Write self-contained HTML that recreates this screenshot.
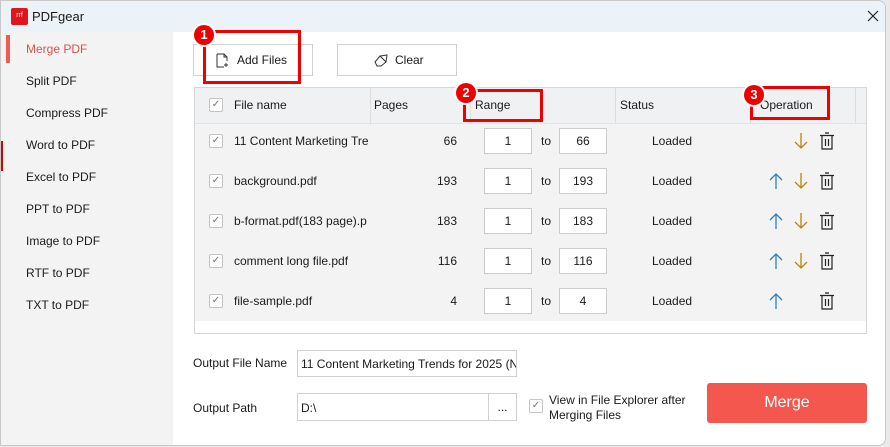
<!DOCTYPE html><html><head><style>
*{box-sizing:border-box;margin:0;padding:0}
body{width:890px;height:447px;background:#e9e9e9;font-family:"Liberation Sans",sans-serif;font-size:12px;color:#1a1a1a;position:relative;overflow:hidden}
.win{position:absolute;left:0;top:0;width:886px;height:446px;background:#fff;border:1px solid #c8c8c8;border-radius:0 8px 8px 0;overflow:hidden}
.title{position:absolute;left:0;top:0;width:100%;height:31px;background:#ebf3f8}
.side{position:absolute;left:0;top:31px;width:172px;height:420px;background:#f3f3f3}
.side div{position:absolute;left:25px;font-size:12px}
.a{position:absolute}
.btn{position:absolute;border:1px solid #d0d0d0;background:#fff;height:32px;top:43px}
.red{position:absolute;border:3px solid #e00}
.badge{position:absolute;width:20px;height:20px;border-radius:50%;background:#e00;color:#fff;font-weight:bold;font-size:13px;text-align:center;line-height:20px;box-shadow:0 0 0 2px #fff}
.cb{position:absolute;width:14px;height:14px;border:1px solid #c4c4c4;background:#fff;border-radius:2px;font-size:10px;color:#777;text-align:center;line-height:12px}
.box{position:absolute;width:48px;height:26px;border:1px solid #ccc;background:#fff;text-align:center;line-height:24px}
</style></head><body>
<div class="win">
<div class="title"></div>
<div class="a" style="left:10px;top:7px;width:17px;height:17px;background:#e0161f;border-radius:2px;color:#fff;font-size:7px;line-height:16px;text-align:center">rrf</div>
<div class="a" style="left:31px;top:8px;font-size:13px">PDFgear</div>
<svg class="a" style="left:866px;top:9px" width="12" height="12" viewBox="0 0 12 12" stroke="#222" stroke-width="1.2"><path d="M1 1L11 11M11 1L1 11"/></svg>
<div class="side">
<div class="a" style="left:5px;top:3px;width:4px;height:28px;background:#ee5a55"></div>
<div style="top:10px;color:#d9534f">Merge PDF</div>
<div style="top:42px">Split PDF</div>
<div style="top:74px">Compress PDF</div>
<div style="top:106px">Word to PDF</div>
<div style="top:138px">Excel to PDF</div>
<div style="top:170px">PPT to PDF</div>
<div style="top:202px">Image to PDF</div>
<div style="top:234px">RTF to PDF</div>
<div style="top:266px">TXT to PDF</div>
</div>
<div class="a" style="left:0;top:140px;width:2px;height:30px;background:#d00"></div>
<div class="btn" style="left:192px;width:120px"><svg class="a" style="left:22px;top:8px" width="14" height="15" viewBox="0 0 14 15" fill="none" stroke="#333" stroke-width="1"><path d="M1 1h7l3 3v4M1 1v13h7M8 1v3h3M10 10v4M8 12h4"/></svg><span class="a" style="left:43px;top:8px">Add Files</span></div>
<div class="btn" style="left:336px;width:120px"><svg class="a" style="left:36px;top:9px" width="15" height="13" viewBox="0 0 15 13" fill="none" stroke="#333" stroke-width="1"><path d="M6 2l7-1-1 7M1 8l5-6 6 6-5 4H3z"/></svg><span class="a" style="left:57px;top:8px">Clear</span></div>
<div class="a" style="left:193px;top:86px;width:673px;height:247px;border:1px solid #d6d6d6;background:#fff">
<div class="a" style="left:0;top:0;width:671px;height:233px;background:#f3f3f3"></div>
<div class="a" style="left:0;top:0;width:671px;height:36px;background:#f0f1f3;border-bottom:1px solid #e2e2e2"></div>
<div class="a" style="left:175px;top:0;width:1px;height:36px;background:#ddd"></div>
<div class="a" style="left:275px;top:0;width:1px;height:36px;background:#ddd"></div>
<div class="a" style="left:420px;top:0;width:1px;height:36px;background:#ddd"></div>
<div class="a" style="left:555px;top:0;width:1px;height:36px;background:#ddd"></div>
<div class="a" style="left:660px;top:0;width:1px;height:36px;background:#ddd"></div>
</div>
<div class="cb" style="left:208px;top:97px">✓</div>
<div class="a" style="left:233px;top:97px">File name</div>
<div class="a" style="left:373px;top:97px">Pages</div>
<div class="a" style="left:474px;top:97px">Range</div>
<div class="a" style="left:619px;top:97px">Status</div>
<div class="a" style="left:759px;top:97px">Operation</div>

<div id="rows"></div>

<div class="a" style="left:192px;top:355px">Output File Name</div>
<div class="a" style="left:296px;top:349px;width:220px;height:27px;border:1px solid #d0d0d0;padding:6px 3px;white-space:nowrap;overflow:hidden">11 Content Marketing Trends for 2025 (N</div>
<div class="a" style="left:192px;top:400px">Output Path</div>
<div class="a" style="left:296px;top:392px;width:192px;height:28px;border:1px solid #d0d0d0;padding:7px 3px">D:\</div>
<div class="a" style="left:487px;top:392px;width:29px;height:28px;border:1px solid #d0d0d0;text-align:center;line-height:26px">...</div>
<div class="cb" style="left:528px;top:398px">✓</div>
<div class="a" style="left:548px;top:392px;line-height:15px">View in File Explorer after<br>Merging Files</div>
<div class="a" style="left:706px;top:382px;width:160px;height:40px;background:#f4574e;border-radius:3px;color:#fff;font-size:16px;text-align:center;line-height:40px">Merge</div>

<div class="red" style="left:202px;top:29px;width:98px;height:54px"></div>
<div class="badge" style="left:193px;top:24px">1</div>
<div class="red" style="left:462px;top:88px;width:80px;height:33px"></div>
<div class="badge" style="left:455px;top:82px">2</div>
<div class="red" style="left:749px;top:85px;width:80px;height:34px"></div>
<div class="badge" style="left:743px;top:84px">3</div>
</div>
<script>
var d=[["11 Content Marketing Tre","66",0,1],["background.pdf","193",1,1],["b-format.pdf(183 page).p","183",1,1],["comment long file.pdf","116",1,1],["file-sample.pdf","4",1,0]];
var h="";d.forEach(function(r,i){var y=140+i*40;
h+='<div class="cb" style="left:208px;top:'+(y-7)+'px">✓</div><div class="a" style="left:233px;top:'+(y-7)+'px;width:135px;overflow:hidden;white-space:nowrap">'+r[0]+'</div>';
h+='<div class="a" style="left:400px;width:56px;text-align:right;top:'+(y-7)+'px">'+r[1]+'</div>';
h+='<div class="box" style="left:483px;top:'+(y-13)+'px">1</div><div class="a" style="left:540px;top:'+(y-7)+'px">to</div><div class="box" style="left:558px;top:'+(y-13)+'px">'+r[1]+'</div>';
h+='<div class="a" style="left:651px;top:'+(y-7)+'px">Loaded</div>';
if(r[2])h+='<svg class="a" style="left:768px;top:'+(y-8)+'px" width="14" height="16" viewBox="0 0 14 16" fill="none" stroke="#2a7fbf" stroke-width="1.3"><path d="M7 1v15M1 7l6-6 6 6"/></svg>';
if(r[3])h+='<svg class="a" style="left:793px;top:'+(y-8)+'px" width="14" height="16" viewBox="0 0 14 16" fill="none" stroke="#b8860b" stroke-width="1.3"><path d="M7 0v15M1 9l6 6 6-6"/></svg>';
h+='<svg class="a" style="left:818px;top:'+(y-9)+'px" width="16" height="18" viewBox="0 0 16 18" fill="none" stroke="#222" stroke-width="1.2"><path d="M1 3.5h14M6 1h4M3 4v13h10V4M6.5 7v7M9.5 7v7"/></svg>';
});document.getElementById("rows").outerHTML=h;
</script>
</body></html>
